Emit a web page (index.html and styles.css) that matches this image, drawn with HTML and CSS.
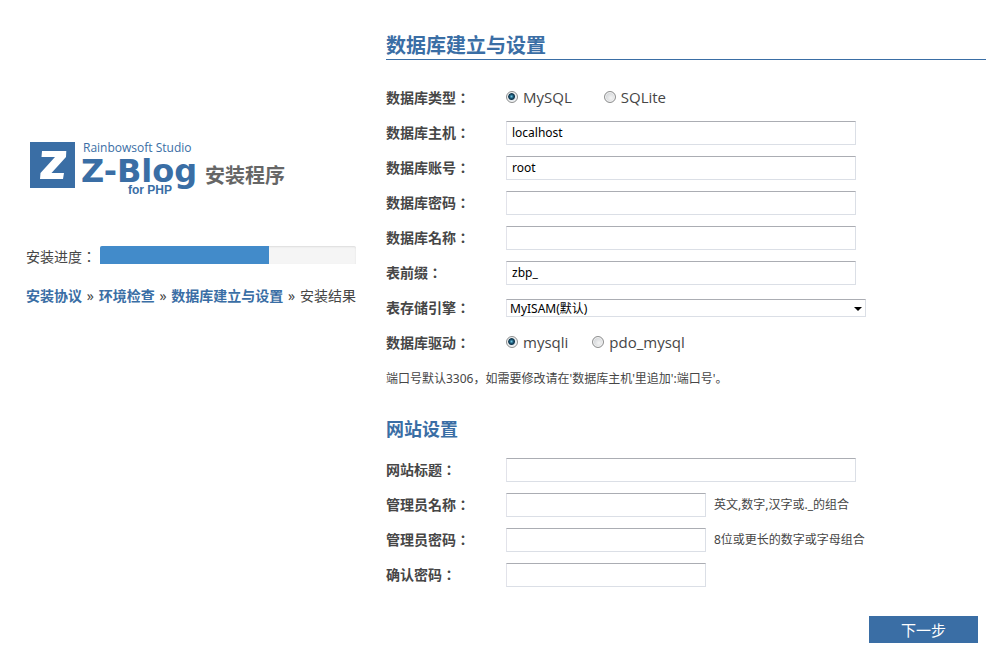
FILE: index.html
```html
<!DOCTYPE html>
<html>
<head>
    <meta charset="UTF-8">
    <meta name="viewport" content="width=device-width, initial-scale=1.0">
    <title>Z-Blog 安装程序</title>
    <link rel="stylesheet" href="styles.css">
</head>
<body>

<form class="setup" method="post" action="#">

    <!-- 左侧：标志与进度 -->
    <aside class="side">
        <div class="brand">
            <svg class="logo" width="170" height="60" viewBox="0 0 170 60" role="img" aria-label="Z-Blog for PHP">
                <rect x="0" y="4" width="45" height="46" fill="#3a6ea5"/>
                <path d="M12 13H36.3L36 19L21.5 35H34L33 41H10L10.5 35L25 19H11.5Z" fill="#fff"/>
                <text class="logo-studio" x="53" y="14">Rainbowsoft Studio</text>
                <text class="logo-name" x="51" y="44">Z-Blog</text>
                <text class="logo-php" x="98" y="56">for PHP</text>
            </svg>
            <span class="brand-text">安装程序</span>
        </div>

        <div class="progress">
            <span class="progress-label" id="progressLabel">安装进度：</span>
            <div class="progress-bar" role="progressbar" aria-labelledby="progressLabel" aria-valuenow="66" aria-valuemin="0" aria-valuemax="100">
                <div class="progress-value" style="width:66%"></div>
            </div>
        </div>

        <nav class="steps">
            <a href="#">安装协议</a> » <a href="#">环境检查</a> » <a href="#">数据库建立与设置</a> » <span>安装结果</span>
        </nav>
    </aside>

    <!-- 右侧：设置表单 -->
    <main class="content">
        <h1>数据库建立与设置</h1>

        <div class="row">
            <span class="name">数据库类型：</span>
            <label class="choice choice-wide"><input type="radio" name="dbtype" checked>MySQL</label>
            <label class="choice"><input type="radio" name="dbtype">SQLite</label>
        </div>
        <div class="row">
            <label class="name" for="dbserver">数据库主机：</label>
            <input class="text" type="text" id="dbserver" value="localhost">
        </div>
        <div class="row">
            <label class="name" for="dbuser">数据库账号：</label>
            <input class="text" type="text" id="dbuser" value="root">
        </div>
        <div class="row">
            <label class="name" for="dbpass">数据库密码：</label>
            <input class="text" type="password" id="dbpass">
        </div>
        <div class="row">
            <label class="name" for="dbname">数据库名称：</label>
            <input class="text" type="text" id="dbname">
        </div>
        <div class="row">
            <label class="name" for="dbpre">表前缀：</label>
            <input class="text" type="text" id="dbpre" value="zbp_">
        </div>
        <div class="row">
            <label class="name" for="dbengine">表存储引擎：</label>
            <div class="select">
                <select id="dbengine">
                    <option>MyISAM(默认)</option>
                    <option>InnoDB</option>
                </select>
            </div>
        </div>
        <div class="row">
            <span class="name">数据库驱动：</span>
            <label class="choice"><input type="radio" name="driver" checked>mysqli</label>
            <label class="choice"><input type="radio" name="driver">pdo_mysql</label>
        </div>
        <p class="note">端口号默认3306，如需要修改请在'数据库主机'里追加':端口号'。</p>

        <h2>网站设置</h2>

        <div class="row">
            <label class="name" for="blogtitle">网站标题：</label>
            <input class="text" type="text" id="blogtitle">
        </div>
        <div class="row">
            <label class="name" for="username">管理员名称：</label>
            <input class="text text-short" type="text" id="username">
            <small>英文,数字,汉字或._的组合</small>
        </div>
        <div class="row">
            <label class="name" for="password">管理员密码：</label>
            <input class="text text-short" type="password" id="password">
            <small>8位或更长的数字或字母组合</small>
        </div>
        <div class="row">
            <label class="name" for="repassword">确认密码：</label>
            <input class="text text-short" type="password" id="repassword">
        </div>

        <div class="actions">
            <button type="submit">下一步</button>
        </div>
    </main>

</form>

</body>
</html>
```
FILE: styles.css
```css
* {
    box-sizing: border-box;
}
body {
    margin: 0;
    background-color: #fff;
    color: #464646;
    font-family: "Noto Sans", "Noto Sans CJK SC", sans-serif;
    font-size: 14px;
    line-height: 20px;
}
.setup {
    display: flex;
    gap: 30px;
    padding: 32px 17px 26px 26px;
}

/* 左侧 */
.side {
    flex: 0 0 330px;
    padding-top: 106px;
}
.brand {
    display: flex;
    align-items: center;
    gap: 5px;
    padding-left: 4px;
}
.logo text {
    fill: #3a6ea5;
}
.logo-studio {
    font-family: "Open Sans", sans-serif;
    font-size: 12px;
}
.logo-name {
    font-family: "DejaVu Sans", sans-serif;
    font-size: 32px;
    font-weight: bold;
}
.logo-php {
    font-family: "Liberation Sans", sans-serif;
    font-size: 12px;
    font-weight: bold;
}
.brand-text {
    color: #666;
    font-size: 20px;
    font-weight: bold;
    padding-top: 16px;
}
.progress {
    display: flex;
    align-items: flex-end;
    gap: 4px;
    margin-top: 48px;
}
.progress-label {
    flex: none;
    font-family: "Noto Sans CJK TC", sans-serif;
}
.progress-bar {
    flex: 1;
    height: 18px;
    margin-bottom: 2px;
    background-color: #f5f5f5;
    border-radius: 2px 2px 0 0;
    box-shadow: inset 0 1px 2px rgba(0, 0, 0, 0.1);
    overflow: hidden;
}
.progress-value {
    height: 100%;
    background-color: #428bca;
}
.steps {
    display: flex;
    justify-content: space-between;
    margin-top: 20px;
    white-space: nowrap;
}
.steps a {
    color: #3a6ea5;
    font-weight: bold;
    text-decoration: none;
}

/* 右侧 */
.content {
    flex: 1;
    min-width: 0;
}
h1 {
    margin: 0 0 20px;
    border-bottom: 1px solid #3a6ea5;
    color: #3a6ea5;
    font-size: 20px;
    line-height: 27px;
}
h2 {
    margin: 19px 0 11px;
    color: #3a6ea5;
    font-size: 18px;
    line-height: 24px;
}
.row {
    display: flex;
    align-items: center;
    height: 35px;
}
.name {
    flex: 0 0 120px;
    padding-bottom: 2px;
    font-family: "Noto Sans CJK TC", sans-serif;
    font-weight: bold;
}
.text {
    width: 350px;
    height: 24px;
    padding: 0 5px;
}
.text-short {
    width: 200px;
}
.text,
select {
    border: 1px solid #dbdfe6;
    border-top-color: #abadb3;
    border-left-color: #e2e3ea;
    border-radius: 0;
    background-color: #fff;
    color: #000;
    font-family: "Noto Sans", "Noto Sans CJK SC", sans-serif;
    font-size: 12px;
}
.select {
    position: relative;
    width: 360px;
    height: 18px;
}
.select::after {
    content: "";
    position: absolute;
    top: 8px;
    right: 4px;
    border: 4px solid transparent;
    border-top-color: #000;
    border-bottom: 0;
    pointer-events: none;
}
select {
    display: block;
    width: 100%;
    height: 100%;
    padding: 0 3px;
    appearance: none;
}
.choice {
    display: flex;
    align-items: center;
    margin-right: 24px;
    padding-bottom: 2px;
    font-family: "Open Sans", sans-serif;
    font-size: 15px;
}
.choice-wide {
    margin-right: 32px;
}
.choice input {
    appearance: none;
    width: 12px;
    height: 12px;
    margin: 0 5px 0 0;
    border: 1px solid #8e8f8f;
    border-radius: 50%;
    background: radial-gradient(circle at 60% 60%, #f4f4f4, #c4c8cc);
    box-shadow: inset 0 0 0 1px #f4f4f4;
}
.choice input:checked {
    background: radial-gradient(circle at 45% 45%, #6cc3e0 0, #16506e 2px, #12364c 3px, #e4eaee 4px);
}
.note,
small {
    font-size: 12px;
}
.note {
    margin: 0;
    padding: 9px 0;
}
small {
    margin-left: 8px;
}
.actions {
    display: flex;
    justify-content: flex-end;
    margin-top: 24px;
    padding-right: 8px;
}
button {
    width: 109px;
    height: 27px;
    padding: 0;
    border: 0;
    background-color: #3a6ea5;
    color: #fff;
    font-family: "Noto Sans CJK SC", sans-serif;
    font-size: 15px;
    line-height: 25px;
    cursor: pointer;
}
```
